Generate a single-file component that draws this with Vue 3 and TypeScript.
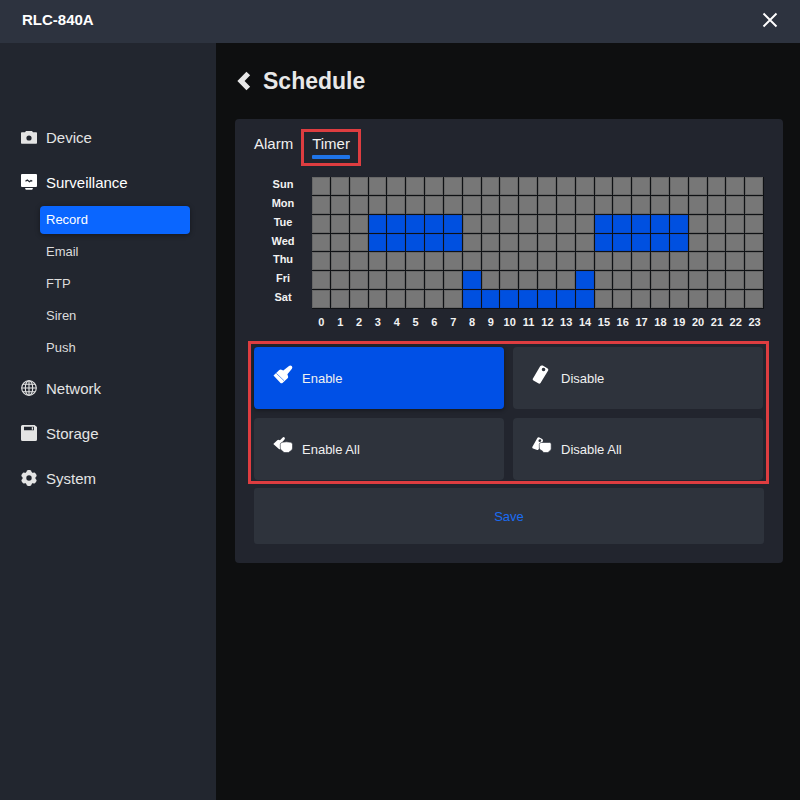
<script setup lang="ts">
import { ref } from 'vue'

type Tool = 'enable' | 'disable' | 'enable-all' | 'disable-all'

const days: string[] = ['Sun', 'Mon', 'Tue', 'Wed', 'Thu', 'Fri', 'Sat']
const hours: number[] = Array.from({ length: 24 }, (_, hour) => hour)
const records: string[] = ['Record', 'Email', 'FTP', 'Siren', 'Push']
const tabs: string[] = ['Alarm', 'Timer']

const tools: { id: Tool; label: string }[] = [
  { id: 'enable', label: 'Enable' },
  { id: 'disable', label: 'Disable' },
  { id: 'enable-all', label: 'Enable All' },
  { id: 'disable-all', label: 'Disable All' },
]

const activePage = ref('Record')
const activeTab = ref('Timer')
const activeTool = ref<Tool>('enable')

const midweek = [3, 4, 5, 6, 7, 15, 16, 17, 18, 19]
const initial: number[][] = [[], [], midweek, midweek, [], [8, 14], [8, 9, 10, 11, 12, 13, 14]]
const schedule = ref<boolean[][]>(initial.map((on) => hours.map((hour) => on.includes(hour))))

function paint(day: number, hour: number): void {
  schedule.value[day][hour] = activeTool.value === 'enable'
}

function pick(tool: Tool): void {
  if (tool === 'enable' || tool === 'disable') {
    activeTool.value = tool
    return
  }
  schedule.value = days.map(() => hours.map(() => tool === 'enable-all'))
}
</script>

<template>
  <div class="app">
    <header class="topbar">
      <span class="model">RLC-840A</span>
      <button class="close" type="button" aria-label="Close">
        <svg viewBox="0 0 16 16" width="16" height="16">
          <path d="M1.500 1.500 14.500 14.500M14.500 1.500 1.500 14.500" fill="none" stroke="currentColor" stroke-width="1.900" />
        </svg>
      </button>
    </header>

    <div class="body">
      <nav class="sidebar">
        <a class="item" href="#device">
          <svg viewBox="0 0 16 16" width="16" height="16">
            <path fill="currentColor" fill-rule="evenodd" d="M5 2h6l1 1.300h3.200q.8 0 .8.8V14q0 .8-.8.800H.8Q0 14.800 0 14V4.100q0-.8.8-.8H4zM8 6.400a2.600 2.600 0 1 0 0 5.200 2.600 2.600 0 0 0 0-5.200z" />
          </svg>
          Device
        </a>
        <a class="item current" href="#surveillance">
          <svg viewBox="0 0 16 16" width="16" height="16">
            <rect x="0" y="0" width="16" height="13" rx="1" fill="currentColor" />
            <path d="M4 14h8l-.8 1.700H4.800z" fill="currentColor" />
            <path d="M4.500 7.300 6.300 6 8.500 7.700 10 6.600 11.300 7.300" fill="none" stroke="#22262f" stroke-width="1.300" />
          </svg>
          Surveillance
        </a>
        <ul class="sub">
          <li v-for="page in records" :key="page">
            <a
              class="subitem"
              :class="{ active: page === activePage }"
              :href="'#' + page.toLowerCase()"
              @click.prevent="activePage = page"
            >{{ page }}</a>
          </li>
        </ul>
        <a class="item" href="#network">
          <svg viewBox="0 0 16 16" width="16" height="16" fill="none" stroke="currentColor" stroke-width="1.100">
            <circle cx="8" cy="8" r="7.300" />
            <ellipse cx="8" cy="8" rx="3.700" ry="7.300" />
            <path d="M8 .7v14.600M.7 8h14.600M1.800 4.300h12.400M1.800 11.700h12.400" />
          </svg>
          Network
        </a>
        <a class="item" href="#storage">
          <svg viewBox="0 0 16 16" width="16" height="16">
            <path fill="currentColor" fill-rule="evenodd" d="M1.500 0h12L16 2v12.500q0 1.500-1.500 1.500h-13Q0 16 0 14.500v-13Q0 0 1.500 0zM3 1.700v3.600h10V1.700z" />
            <rect x="10.800" y="2.200" width="1.300" height="2.500" fill="currentColor" />
          </svg>
          Storage
        </a>
        <a class="item" href="#system">
          <svg viewBox="0 0 16 16" width="16" height="16">
            <circle cx="8" cy="8" r="4.600" fill="none" stroke="currentColor" stroke-width="3.800" />
            <g fill="currentColor">
              <rect x="5.500" y="0" width="5" height="4" rx="1.800" />
              <rect x="5.500" y="0" width="5" height="4" rx="1.800" transform="rotate(60 8 8)" />
              <rect x="5.500" y="0" width="5" height="4" rx="1.800" transform="rotate(120 8 8)" />
              <rect x="5.500" y="0" width="5" height="4" rx="1.800" transform="rotate(180 8 8)" />
              <rect x="5.500" y="0" width="5" height="4" rx="1.800" transform="rotate(240 8 8)" />
              <rect x="5.500" y="0" width="5" height="4" rx="1.800" transform="rotate(300 8 8)" />
            </g>
          </svg>
          System
        </a>
      </nav>

      <main class="content">
        <div class="heading">
          <button class="back" type="button" aria-label="Back">
            <svg viewBox="0 0 14 20" width="14" height="20">
              <path d="M11.300 2.500 4 10l7.300 7.500" fill="none" stroke="currentColor" stroke-width="5.200" />
            </svg>
          </button>
          <h1>Schedule</h1>
        </div>

        <section class="card">
          <div class="tabs">
            <button
              v-for="tab in tabs"
              :key="tab"
              class="tab"
              :class="{ active: tab === activeTab, marked: tab === 'Timer' }"
              type="button"
              @click="activeTab = tab"
            >{{ tab }}</button>
          </div>

          <table class="week">
            <tbody>
              <tr v-for="(day, d) in days" :key="day">
                <th scope="row">{{ day }}</th>
                <td v-for="hour in hours" :key="hour">
                  <button
                    class="slot"
                    :class="{ on: schedule[d][hour] }"
                    type="button"
                    :aria-label="`${day} ${hour}`"
                    :aria-pressed="schedule[d][hour]"
                    @click="paint(d, hour)"
                  ></button>
                </td>
              </tr>
            </tbody>
            <tfoot>
              <tr>
                <td></td>
                <th v-for="hour in hours" :key="hour" scope="col">{{ hour }}</th>
              </tr>
            </tfoot>
          </table>

          <div class="tools">
            <button
              v-for="tool in tools"
              :key="tool.id"
              class="tool"
              :class="{ active: tool.id === activeTool }"
              type="button"
              @click="pick(tool.id)"
            >
              <svg viewBox="0 0 20 20" width="20" height="20">
                <g v-if="tool.id === 'enable'">
                  <path fill="#fff" d="M.5 10.500 6.300 5q1-.8 2.200-.2l1.800.8L16 .9q1.500-.9 2.700.2 1.200 1.300.2 2.700l-4.500 5.500.7 2.100q.3 1-.5 1.800L9.500 18q-1 .7-2 0z" />
                  <path d="M3.300 8.300 11 15.700" stroke="#3f7bee" stroke-width=".8" />
                </g>
                <path
                  v-else-if="tool.id === 'disable'"
                  fill="#fff"
                  fill-rule="evenodd"
                  d="M.8 13.700 8 1.600Q9-.1 10.700.6l4.600 2.600q1.600 1 .7 2.500L8.500 18q-.7 1-1.800.5l-5.300-3q-1.100-.7-.6-1.800zM11.500 2.700a1.800 1.800 0 1 0 .1 3.600 1.800 1.800 0 0 0-.1-3.600z"
                />
                <g v-else-if="tool.id === 'enable-all'" fill="#fff">
                  <path d="M.3 8 4.300 4.200Q5 3.600 6 4l1 .3L9.700 1.500q1.200-.8 1.900.1.700 1-.1 1.900L9.200 6.200 8 13 6.200 13.200z" />
                  <path d="M9 6.300q4.500-1 8.800 0 1.700.5 1.700 2.200v3.600q0 2-1.700 2.700L15.500 16.500H11l-1.700-1.700Q7.300 14 7.300 12V8.500Q7.300 6.800 9 6.300z" stroke="#2e333c" stroke-width=".6" />
                </g>
                <g v-else fill="#fff">
                  <path fill-rule="evenodd" d="M.3 11 5.200 2.200Q6 .8 7.400 1.500l2.800 1.500q1.300.8.600 2.200l-4.300 8.400q-.5.8-1.300.3L1 12.500Q0 12 .3 11zM7.800 3.200a1.400 1.400 0 1 0 .1 2.800 1.400 1.400 0 0 0-.1-2.800z" />
                  <path d="M9 6.500h8.700q1.500 0 1.500 1.500v5q0 1.200-1.300 1.700L16 16.500h-4.500l-1.300-1.700q-2.200-.5-2.900-2.500V8.300Q7.300 6.800 9 6.500z" stroke="#2e333c" stroke-width=".6" />
                </g>
              </svg>
              {{ tool.label }}
            </button>
          </div>

          <button class="save" type="button">Save</button>
        </section>
      </main>
    </div>
  </div>
</template>

<style>
body {
  margin: 0;
  background: #0e0f10;
}
</style>

<style scoped>
.app {
  display: flex;
  flex-direction: column;
  min-height: 100vh;
  color: #e8e8e8;
  font-family: "Liberation Sans", Arial, sans-serif;
  font-size: 15px;
}

button {
  margin: 0;
  padding: 0;
  border: 0;
  background: none;
  color: inherit;
  font: inherit;
  cursor: pointer;
}

svg {
  display: block;
  flex: none;
}

.topbar {
  display: flex;
  align-items: center;
  justify-content: space-between;
  height: 39px;
  padding: 0 22px 4px;
  background: #2d333f;
}

.model {
  color: #fff;
  font-weight: bold;
}

.close {
  color: #fff;
}

.body {
  display: flex;
  flex: 1;
}

.sidebar {
  box-sizing: border-box;
  flex: 0 0 216px;
  padding: 80px 26px 24px 21px;
  background: #22262f;
}

.item {
  display: flex;
  align-items: center;
  gap: 9px;
  height: 28px;
  margin-bottom: 17px;
  color: #e4e4e4;
  text-decoration: none;
}

.item.current {
  margin-bottom: 10px;
  color: #fff;
}

.sub {
  display: flex;
  flex-direction: column;
  gap: 4px;
  margin: 0 0 12px 19px;
  padding: 0;
  list-style: none;
}

.subitem {
  display: block;
  padding-left: 6px;
  border-radius: 4px;
  color: #dcdcdc;
  font-size: 13px;
  line-height: 28px;
  text-decoration: none;
}

.subitem.active {
  background: #0a66ff;
  box-shadow: 0 1px 5px rgba(0, 0, 0, 0.4);
  color: #fff;
}

.content {
  flex: 1;
  min-width: 0;
  padding: 24px 17px 24px 19px;
}

.heading {
  display: flex;
  align-items: center;
  gap: 12px;
  height: 28px;
  margin-bottom: 24px;
  padding-left: 2px;
}

h1 {
  margin: 0;
  font-size: 23px;
  line-height: 28px;
}

.card {
  padding: 16px 19px 19px;
  border-radius: 4px;
  background: #22252e;
}

.tabs {
  display: flex;
  gap: 19px;
  margin-bottom: 18px;
}

.tab {
  position: relative;
  padding-bottom: 6px;
  color: #f0f0f0;
  line-height: 18px;
}

.tab.active::before {
  position: absolute;
  inset: auto 0 0;
  height: 4px;
  border-radius: 1px;
  background: #1f74e8;
  content: "";
}

/* Highlight frames drawn over the interface */
.tab.marked::after,
.tools::after {
  position: absolute;
  border: 3px solid #de3d40;
  content: "";
  pointer-events: none;
}

.tab.marked::after {
  inset: -6px -11px -7px;
}

.tools::after {
  inset: -6px -6px -4px;
}

.week {
  display: grid;
  grid-template-columns: 58px repeat(24, 1fr);
  grid-template-rows: repeat(7, 1fr) 26px;
  height: 158px;
  margin-bottom: 12px;
  color: #f2f2f2;
  font-size: 11px;
  line-height: 15px;
}

.week tbody,
.week tfoot,
.week tr {
  display: contents;
}

.week th,
.week td {
  min-width: 0;
  padding: 0;
  text-align: center;
}

.week tfoot th {
  align-self: center;
}

.week tbody td {
  display: flex;
  padding: 0 1px 1px 0;
  background: #0f1114;
}

.slot {
  flex: 1;
  border: 1px solid #676767;
  background: #777;
}

.slot.on {
  border-color: #034bd2;
  background: #0050e0;
}

.tools {
  position: relative;
  display: grid;
  grid-template-columns: 1fr 1fr;
  gap: 9px;
  margin: 0 1px 8px 0;
}

.tool {
  display: flex;
  align-items: center;
  gap: 9px;
  height: 62px;
  padding-left: 19px;
  border-radius: 4px;
  background: #2e333c;
  color: #f0f0f0;
  font-size: 13px;
}

.tool svg {
  margin-bottom: 6px;
}

.tool.active {
  background: #0050e6;
  box-shadow: 0 1px 4px rgba(0, 0, 0, 0.4);
}

.save {
  display: block;
  width: 100%;
  height: 56px;
  border-radius: 3px;
  background: #2e333c;
  color: #1b6cf2;
  font-size: 13px;
}
</style>
